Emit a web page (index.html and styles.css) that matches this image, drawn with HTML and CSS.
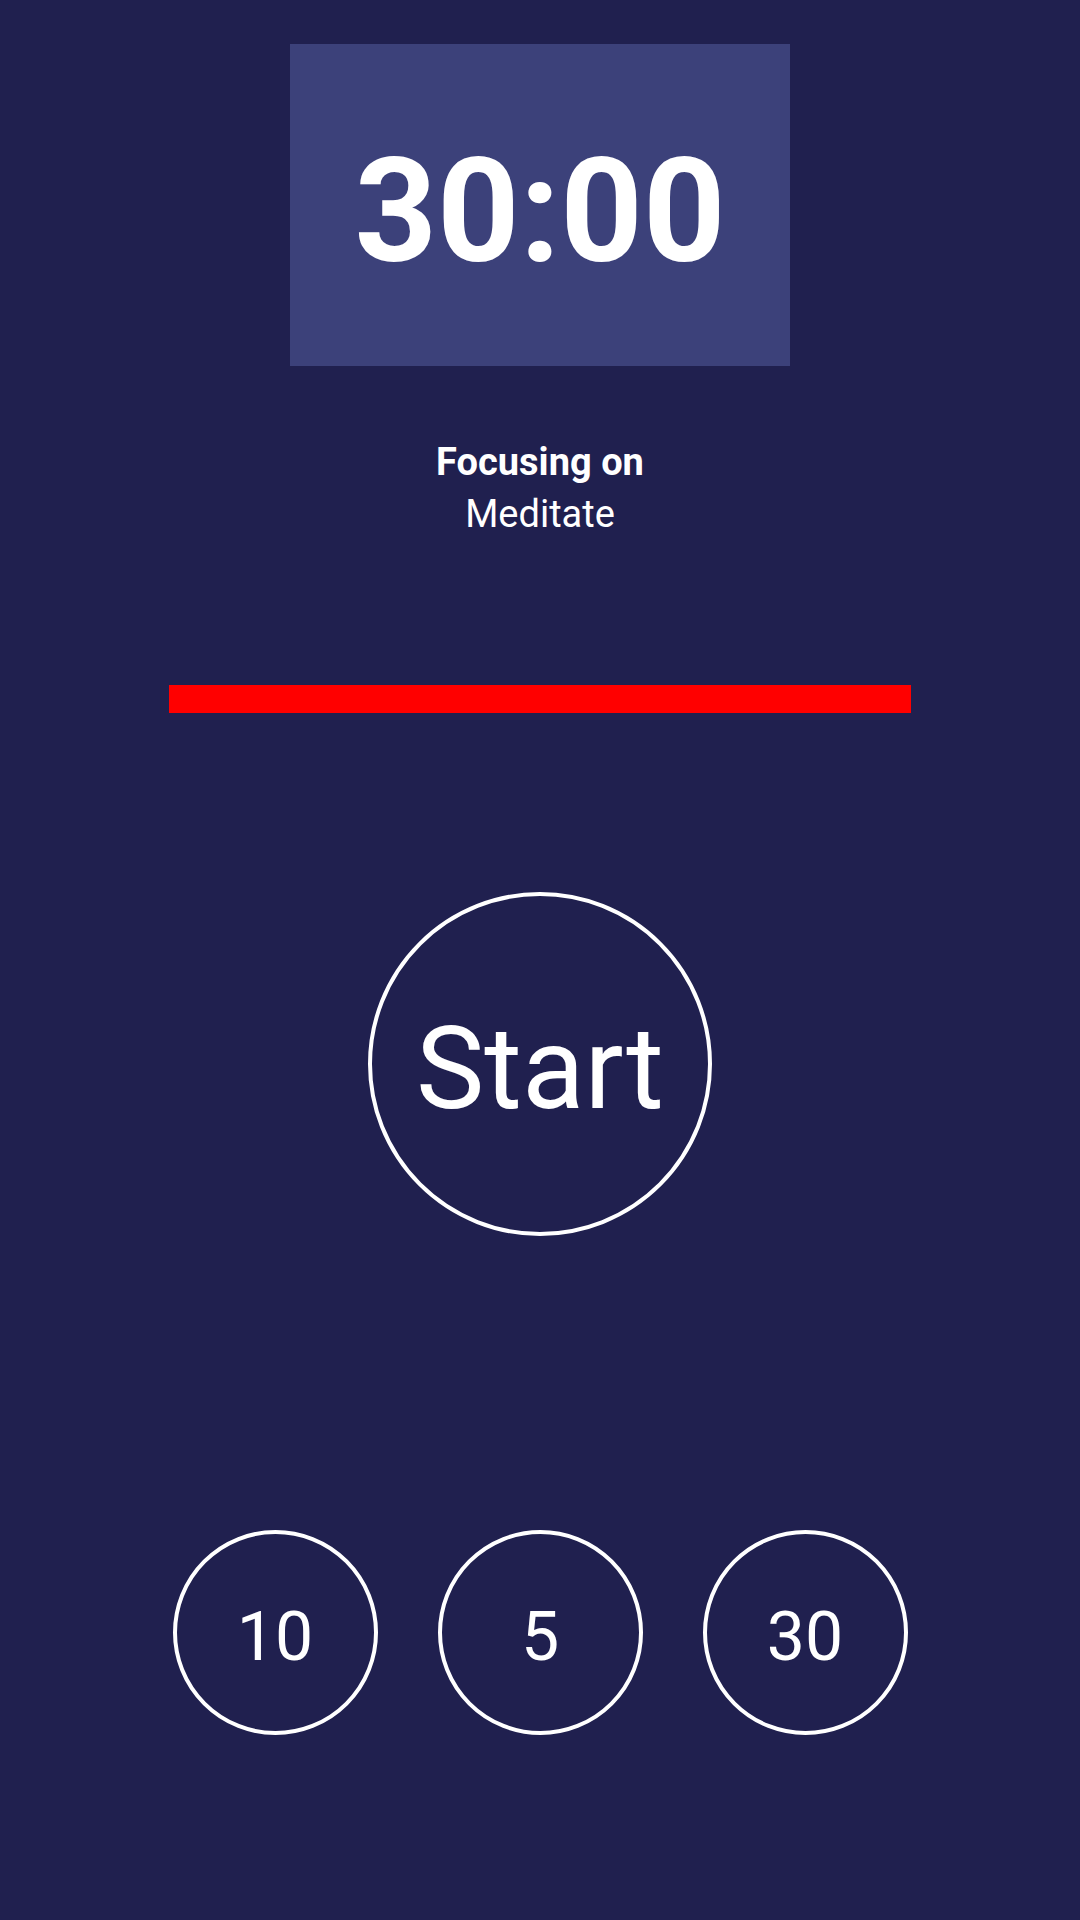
FILE: index.html
```html
<!DOCTYPE html>
<html lang="en">
<head>
<meta charset="utf-8">
<title>Focus Timer</title>
<link rel="stylesheet" href="styles.css">
</head>
<body>
<main class="app">
  <div class="timer-box"><span class="timer">30:00</span></div>
  <div class="focus">
    <div class="focus-label">Focusing on</div>
    <div class="focus-task">Meditate</div>
  </div>
  <div class="progress"></div>
  <button class="start-btn"><span>Start</span></button>
  <div class="presets">
    <button class="preset"><span>10</span></button>
    <button class="preset"><span>5</span></button>
    <button class="preset"><span>30</span></button>
  </div>
</main>
</body>
</html>
```

FILE: styles.css
```css
html, body {
  margin: 0;
  padding: 0;
  background: #20204f;
}
body {
  width: 1080px;
  height: 1920px;
  font-family: Roboto, "Liberation Sans", sans-serif;
  color: #ffffff;
  overflow: hidden;
}
.app {
  display: flex;
  flex-direction: column;
  align-items: center;
  padding-top: 44px;
}
.timer-box {
  width: 500px;
  height: 322px;
  background: #3c417a;
  box-sizing: border-box;
  padding-top: 14px;
  display: flex;
  align-items: center;
  justify-content: center;
}
.timer {
  font-size: 144px;
  font-weight: 700;
  line-height: 1.17;
}
.focus {
  margin-top: 70px;
  text-align: center;
  font-size: 38px;
  line-height: 52px;
}
.focus-label {
  font-weight: 700;
}
.focus-task {
  font-weight: 400;
}
.progress {
  margin-top: 145px;
  width: 742px;
  height: 28px;
  background: #ff0000;
}
button {
  font-family: inherit;
  color: #ffffff;
  background: transparent;
  padding: 0;
  cursor: pointer;
}
.start-btn {
  margin-top: 179px;
  width: 344px;
  height: 344px;
  box-sizing: border-box;
  border: 4px solid #ffffff;
  border-radius: 50%;
  display: flex;
  align-items: center;
  justify-content: center;
  padding-top: 10px;
  font-size: 115px;
  line-height: 1.17;
}
.presets {
  margin-top: 294px;
  display: flex;
  gap: 60px;
}
.preset {
  width: 205px;
  height: 205px;
  box-sizing: border-box;
  border: 4px solid #ffffff;
  border-radius: 50%;
  display: flex;
  align-items: center;
  justify-content: center;
  padding-top: 10px;
  font-size: 68px;
  line-height: 1.17;
}
```
